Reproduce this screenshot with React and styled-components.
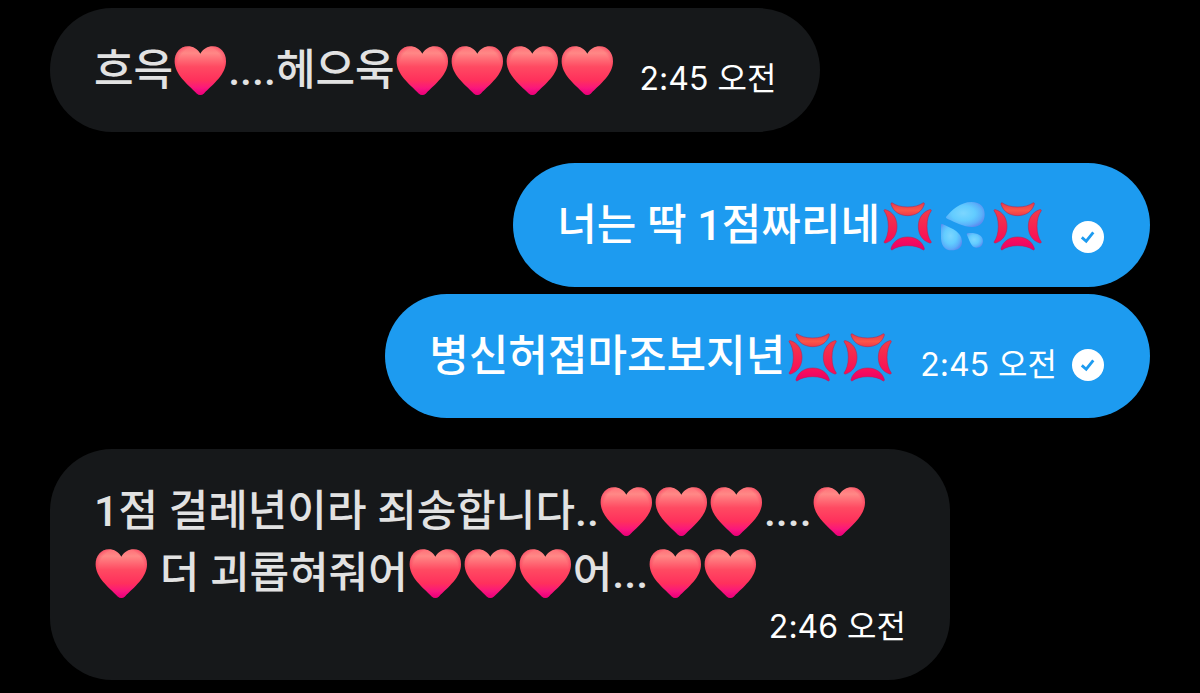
import React from 'react';
import styled, { createGlobalStyle } from 'styled-components';

const GlobalStyle = createGlobalStyle`
    * {
        box-sizing: border-box;
    }
    body {
        margin: 0;
        background: #000;
        font-family: Inter, "Noto Sans CJK KR", sans-serif;
    }
`;

const Thread = styled.main`
    display: flex;
    flex-direction: column;
    gap: 31px;
    padding: 8px 50px 12px;
`;

const Group = styled.section`
    display: flex;
    flex-direction: column;
    align-items: ${(props) => (props.$own ? 'flex-end' : 'flex-start')};
    gap: 7px;
`;

const Bubble = styled.article`
    display: flex;
    flex-direction: ${(props) => (props.$stacked ? 'column' : 'row')};
    align-items: flex-end;
    column-gap: 25px;
    max-width: 900px;
    padding: 31px 44px;
    border-radius: 62px;
    background: ${(props) => (props.$own ? '#1d9bf0' : '#16181a')};
    color: ${(props) => (props.$own ? '#fff' : '#e2e2e2')};
`;

const Text = styled.p`
    align-self: flex-start;
    margin: 0;
    font-family: Roboto, "Noto Sans CJK KR", sans-serif;
    font-size: 43px;
    font-weight: 500;
    line-height: 62px;
`;

const Meta = styled.div`
    display: flex;
    align-items: center;
    gap: 13px;
    min-height: 38px;
    flex-shrink: 0;
`;

const Time = styled.time`
    color: #fff;
    font-size: 32px;
    line-height: 45px;
    white-space: nowrap;
`;

const EmojiSvg = styled.svg`
    width: 55px;
    height: 55px;
    vertical-align: -14px;
`;

const BadgeSvg = styled.svg`
    display: block;
    width: 36px;
    height: 36px;
`;

const HiddenSvg = styled.svg`
    position: absolute;
    width: 0;
    height: 0;
`;

// gradients shared by all emoji
const EmojiDefs = () => (
    <HiddenSvg aria-hidden="true">
        <defs>
            <linearGradient id="heart" x1="0" y1="0" x2="0" y2="1">
                <stop offset="0" stopColor="#ff7078" />
                <stop offset="0.14" stopColor="#ff8886" />
                <stop offset="0.42" stopColor="#ff4a62" />
                <stop offset="0.7" stopColor="#ff305c" />
                <stop offset="0.84" stopColor="#fb1a78" />
                <stop offset="1" stopColor="#ee00a0" />
            </linearGradient>
            <radialGradient id="heartEdge" cx="0.5" cy="0.42" r="0.6">
                <stop offset="0.74" stopColor="#f0003c" stopOpacity="0" />
                <stop offset="1" stopColor="#e8003c" stopOpacity="0.5" />
            </radialGradient>
            <linearGradient id="angerTop" x1="0" y1="0" x2="0" y2="1">
                <stop offset="0" stopColor="#e83a48" />
                <stop offset="0.6" stopColor="#fb5549" />
                <stop offset="1" stopColor="#f03a48" />
            </linearGradient>
            <linearGradient id="angerLeft" x1="1" y1="0" x2="0" y2="0">
                <stop offset="0" stopColor="#f23c48" />
                <stop offset="1" stopColor="#fa0a58" />
            </linearGradient>
            <linearGradient id="angerRight" x1="0" y1="0" x2="1" y2="0">
                <stop offset="0" stopColor="#f23c48" />
                <stop offset="1" stopColor="#fa0a58" />
            </linearGradient>
            <linearGradient id="angerBottom" x1="0" y1="0" x2="0" y2="1">
                <stop offset="0" stopColor="#e8006a" />
                <stop offset="1" stopColor="#fc1058" />
            </linearGradient>
            <radialGradient id="drop" cx="0.45" cy="0.45" r="0.6">
                <stop offset="0" stopColor="#7cd6ff" />
                <stop offset="0.5" stopColor="#62ccff" />
                <stop offset="0.8" stopColor="#5ab0fa" />
                <stop offset="1" stopColor="#5c8cf0" />
            </radialGradient>
        </defs>
    </HiddenSvg>
);

const HEART = 'M82 29C74 15 60 7 45 7C22 7 5 26 5 52C5 91 42 120 72 149Q82 157 92 149C122 120 159 91 159 52C159 26 142 7 119 7C104 7 90 15 82 29Z';
const CRESCENT = 'M36 11C47 19 62 24 83 24C104 24 119 19 130 11Q134 11 133 16C126 38 107 50 83 50C59 50 40 38 33 16Q32 11 36 11Z';

const Heart = () => (
    <EmojiSvg viewBox="0 0 165 165" role="img" aria-label="하트">
        <path d={HEART} fill="url(#heart)" />
        <path d={HEART} fill="url(#heartEdge)" />
    </EmojiSvg>
);

const Anger = () => (
    <EmojiSvg viewBox="0 0 165 165" role="img" aria-label="분노">
        <g stroke="#b8204c" strokeOpacity="0.8" strokeWidth="2" strokeLinejoin="round">
            <path d={CRESCENT} fill="url(#angerTop)" />
            <path d={CRESCENT} fill="url(#angerLeft)" transform="rotate(-90 83 82)" />
            <path d={CRESCENT} fill="url(#angerRight)" transform="rotate(90 83 82)" />
            <path d={CRESCENT} fill="url(#angerBottom)" transform="rotate(180 83 82)" />
        </g>
    </EmojiSvg>
);

const Sweat = () => (
    <EmojiSvg viewBox="0 0 165 165" role="img" aria-label="땀방울">
        <path fill="url(#drop)" d="M33 54C50 34 75 9 110 9C136 9 149 24 149 46C149 70 135 84 112 84C85 84 62 70 38 60Q31 57 33 54Z" />
        <path fill="url(#drop)" d="M18 78Q18 73 24 76C44 86 81 97 81 128C81 145 68 154 50 154C28 154 17 138 18 110Z" />
        <path fill="url(#drop)" d="M95 106Q95 102 102 102C125 101 144 108 144 126C144 139 136 146 124 146C108 146 104 125 95 106Z" />
    </EmojiSvg>
);

const ReadBadge = () => (
    <BadgeSvg viewBox="0 0 36 36" role="img" aria-label="읽음">
        <circle cx="18" cy="18" r="16" fill="#fff" />
        <path d="M11.8 18.4L16.2 22.2L23.3 13.4" fill="none" stroke="#1d9bf0" strokeWidth="2.8" />
    </BadgeSvg>
);

const EMOJI = {
    '❤': Heart,
    '💢': Anger,
    '💦': Sweat,
};

const groups = [
    {
        own: false,
        messages: [{ text: '흐윽❤....헤으욱❤❤❤❤', time: '2:45 오전' }],
    },
    {
        own: true,
        messages: [
            { text: '너는 딱 1점짜리네💢💦💢' },
            { text: '병신허접마조보지년💢💢', time: '2:45 오전' },
        ],
    },
    {
        own: false,
        messages: [
            {
                text: '1점 걸레년이라 죄송합니다..❤❤❤....❤❤ 더 괴롭혀줘어❤❤❤어...❤❤',
                time: '2:46 오전',
                stacked: true,
            },
        ],
    },
];

// swaps each emoji character for its drawing
const renderText = (text) =>
    text.split(/(❤|💢|💦)/u).map((part, i) => {
        const Emoji = EMOJI[part];
        return Emoji ? <Emoji key={i} /> : part;
    });

const Message = ({ text, time, stacked, own }) => (
    <Bubble $own={own} $stacked={stacked}>
        <Text>{renderText(text)}</Text>
        <Meta>
            {time && <Time>{time}</Time>}
            {own && <ReadBadge />}
        </Meta>
    </Bubble>
);

const App = () => {
    return (
        <>
            <GlobalStyle />
            <EmojiDefs />
            <Thread lang="ko">
                {groups.map((group, i) => (
                    <Group key={i} $own={group.own}>
                        {group.messages.map((message) => (
                            <Message key={message.text} own={group.own} {...message} />
                        ))}
                    </Group>
                ))}
            </Thread>
        </>
    );
};

export default App;
